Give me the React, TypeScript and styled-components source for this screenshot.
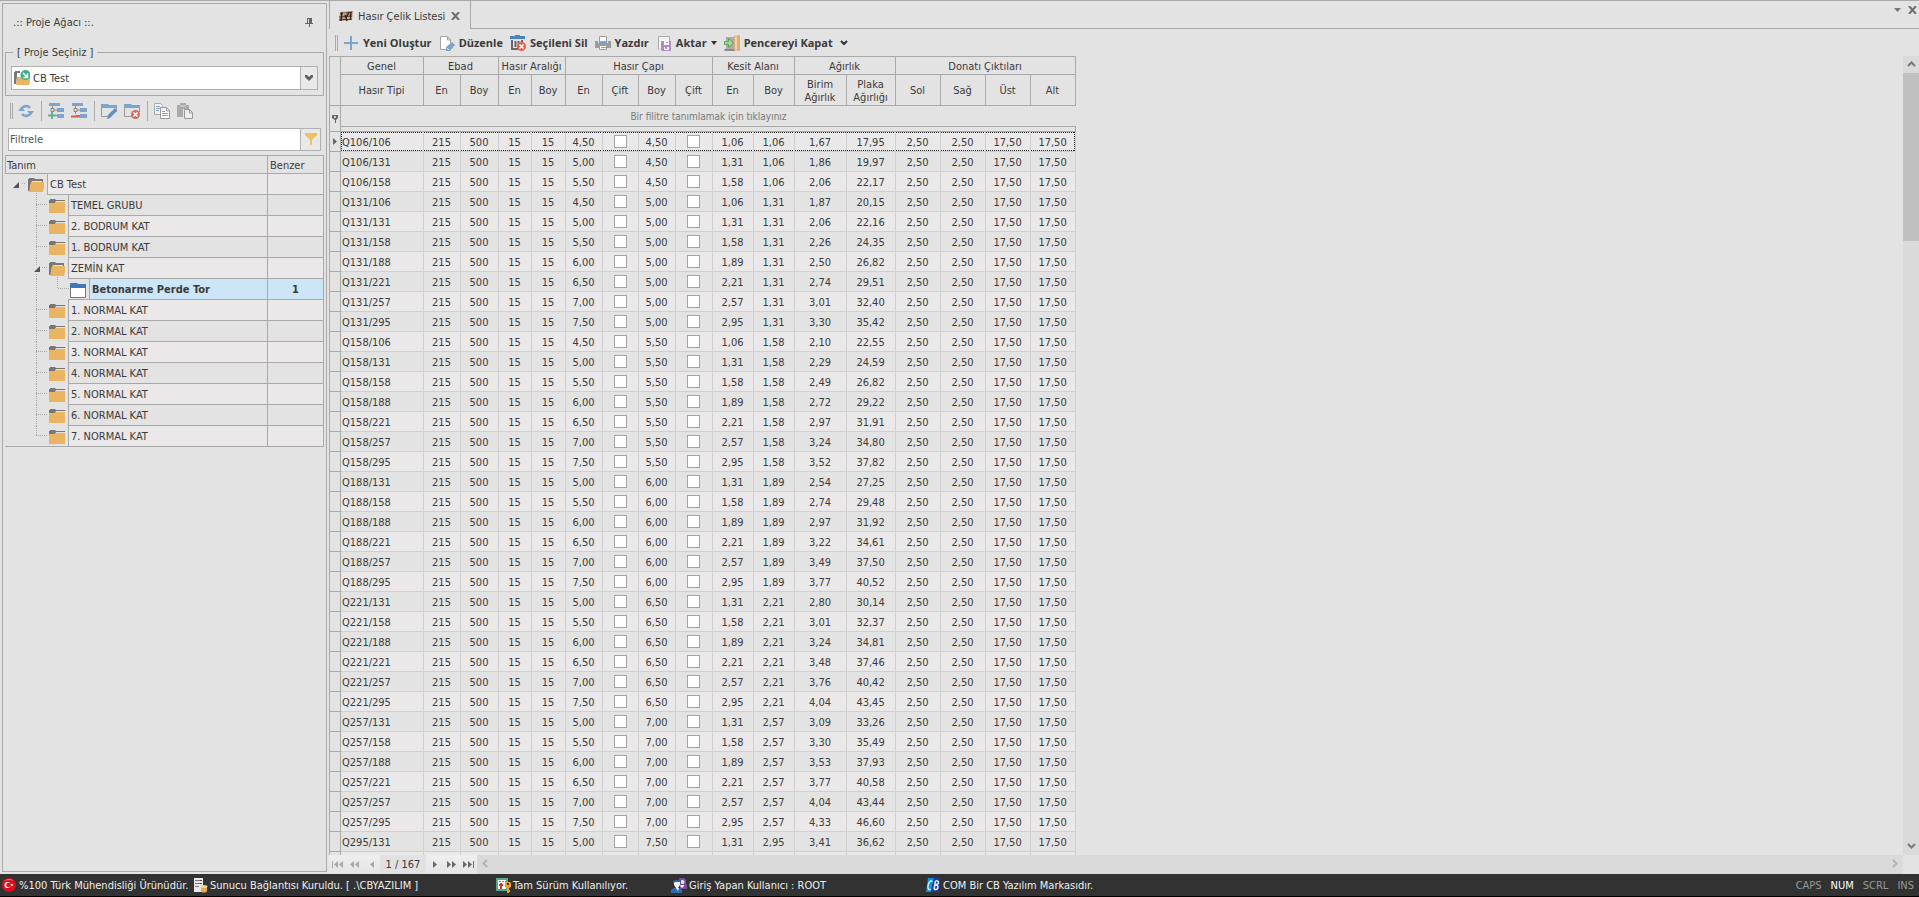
import React from 'react';
import styled, { createGlobalStyle, css } from 'styled-components';

const line = '#a9a9a9';
const soft = '#cfcfcf';
const face = '#e3e3e3';
const alt = '#eae8e9';
const ink = '#3a3a3a';
const blue = '#7ba4cf';
const orange = '#e9b562';
const grey = '#777777';

const Global = createGlobalStyle`
  *, *::before, *::after { box-sizing: border-box; }
  body { margin: 0; }
  body, button, input, select, table {
    font-family: 'DejaVu Sans Condensed', 'Noto Sans', sans-serif;
    font-size: 11px;
    line-height: 13px;
    color: ${ink};
  }
`;

/* ---------- page frame ---------- */

const Shell = styled.div`
  display: flex;
  flex-direction: column;
  height: 100vh;
  background: ${face};
`;

const Workspace = styled.div`
  display: flex;
  flex: 1;
  min-height: 0;
  gap: 2px;
  border-top: 1px solid ${line};
`;

const Panel = styled.aside`
  display: flex;
  flex-direction: column;
  width: 325px;
  flex: none;
  margin: 2px 0 2px 2px;
  border: 1px solid ${line};
`;

const Content = styled.main`
  display: flex;
  flex: 1;
  flex-direction: column;
  min-width: 0;
`;

const IconButton = styled.button`
  display: flex;
  align-items: center;
  justify-content: center;
  padding: 0;
  border: 0;
  background: none;
`;

/* ---------- project panel ---------- */

const PanelTitle = styled.header`
  display: flex;
  align-items: center;
  justify-content: space-between;
  height: 36px;
  margin-bottom: 6px;
  padding: 0 13px 0 10px;
`;

const PanelName = styled.h2`
  margin: 0;
  font-size: 11px;
  font-weight: 400;
`;

const ProjectGroup = styled.fieldset`
  min-width: 0;
  margin: 0 2px;
  padding: 7px 5px 5px;
  border: 1px solid ${line};
`;

const GroupLegend = styled.legend`
  margin-left: 2px;
  padding: 0 4px;
`;

const ComboFrame = styled.label`
  display: flex;
  align-items: center;
  height: 24px;
  padding-left: 2px;
  border: 1px solid #b0b0b0;
  background: #fff;
`;

const Combo = styled.select`
  flex: 1;
  height: 22px;
  padding: 0 0 0 3px;
  border: 0;
  background: #fff;
  appearance: none;
`;

const BoxEnd = styled.span<{ $w: number }>`
  display: flex;
  align-items: center;
  justify-content: center;
  align-self: stretch;
  width: ${(p) => p.$w}px;
  border-left: 1px solid #b0b0b0;
  background: #e9e9e9;
`;

const PanelTools = styled.div`
  display: flex;
  align-items: center;
  gap: 7px;
  height: 32px;
  padding: 0 7px 2px;
`;

const Grip = styled.span`
  width: 3px;
  height: 16px;
  margin-right: -2px;
  border: solid ${line};
  border-width: 0 1px;
`;

const Divider = styled.span`
  width: 1px;
  height: 20px;
  margin-right: -1px;
  background: ${line};
`;

const FilterFrame = styled.div`
  display: flex;
  height: 23px;
  margin: 0 5px 4px;
  border: 1px solid #b0b0b0;
  background: #fff;
`;

const FilterInput = styled.input`
  flex: 1;
  min-width: 0;
  padding: 0 1px;
  border: 0;
  background: none;
  &::placeholder { color: #555; opacity: 1; }
`;

const TreeTable = styled.table`
  width: auto;
  margin: 0 2px;
  border-spacing: 0;
  table-layout: fixed;
`;

const TreeHead = styled.th`
  height: 19px;
  padding: 1px 2px 0;
  border: solid ${line};
  border-width: 1px 1px 1px 0;
  font-weight: 400;
  text-align: left;
  &:first-child { width: 263px; border-left-width: 1px; padding-left: 1px; }
`;

const TreeCell = styled.td`
  height: 21px;
  padding: 0;
  border-right: 1px solid ${line};
`;

const TreeLine = styled.div`
  display: flex;
`;

const Label = styled.div<{ $tone: string; $bold?: boolean }>`
  flex: 1;
  height: 21px;
  padding-left: 2px;
  border-left: 1px solid ${line};
  border-bottom: 1px solid ${line};
  background: ${(p) => p.$tone};
  line-height: 21px;
  font-weight: ${(p) => (p.$bold ? 700 : 400)};
`;

const Amount = styled.div<{ $tone: string }>`
  height: 21px;
  border-bottom: 1px solid ${line};
  background: ${(p) => p.$tone};
  line-height: 21px;
  font-weight: 700;
  text-align: center;
`;

const Gutter = styled.svg`
  display: block;
  flex: none;
`;

/* ---------- document area ---------- */

const TabStrip = styled.div`
  display: flex;
  align-items: flex-start;
  justify-content: space-between;
  height: 28px;
  border-bottom: 1px solid ${line};
`;

const Tab = styled.div`
  display: flex;
  align-items: center;
  width: 142px;
  height: 28px;
  padding: 2px 10px 0 8px;
  border: solid ${line};
  border-width: 0 1px;
  background: ${face};
`;

const TabName = styled.span`
  flex: 1;
  padding-left: 4px;
  white-space: nowrap;
`;

const WindowButtons = styled.div`
  display: flex;
  align-items: center;
  gap: 7px;
  padding: 5px 2px 0 0;
`;

const ActionBar = styled.div`
  display: flex;
  align-items: center;
  gap: 7px;
  height: 27px;
  padding: 1px 6px 0;
`;

const ActionButton = styled(IconButton)`
  gap: 4px;
  font-family: 'Open Sans', 'Noto Sans', sans-serif;
  font-weight: 700;
  line-height: 16px;
  white-space: nowrap;
`;

const GridArea = styled.div`
  display: flex;
  flex: 1;
  min-height: 0;
`;

const GridViewport = styled.div`
  flex: 1;
  overflow: hidden;
`;

const Grid = styled.table`
  width: 747px;
  border-spacing: 0;
  table-layout: fixed;
`;

const Head = styled.th<{ $top?: boolean }>`
  height: ${(p) => (p.$top ? 19 : 31)}px;
  padding: 1px 1px 0 0;
  border: solid ${line};
  border-width: ${(p) => (p.$top ? '1px 1px 1px 0' : '0 1px 1px 0')};
  font-weight: 400;
  white-space: pre-line;
`;

const Marker = styled.th<{ $first?: boolean }>`
  padding: 0;
  border: solid ${line};
  border-width: ${(p) => (p.$first ? 1 : 0)}px 1px 1px 1px;
  svg { display: block; margin: 0 auto; }
`;

const FilterPrompt = styled.td`
  height: 21px;
  padding: 1px 0 0;
  border-bottom: 1px solid ${line};
  font-size: 10px;
  color: #777;
  text-align: center;
`;

const FilterGap = styled.td`
  height: 5px;
  padding: 0;
  border: solid ${line};
  border-width: 0 1px 1px 0;
`;

const dots = (dir: string) =>
  `repeating-linear-gradient(${dir}, #222 0 1px, transparent 1px 2px)`;

const Cell = styled.td`
  height: 20px;
  padding: 2px 1px 0 0;
  border: solid ${soft};
  border-width: 0 1px 1px 0;
  text-align: center;
  &:nth-child(2) { padding-left: 1px; text-align: left; }
`;

const TickCell = styled(Cell)`
  padding-top: 0;
`;

const Row = styled.tr<{ $focused?: boolean }>`
  &:nth-child(odd) ${Cell} { background-color: ${alt}; }
  ${(p) =>
    p.$focused &&
    css`
      ${Cell} {
        background-image: ${dots('90deg')}, ${dots('90deg')};
        background-position: 0 0, 0 100%;
        background-size: 100% 1px;
        background-repeat: no-repeat;
      }
      ${Cell}:nth-child(2) {
        background-image: ${dots('90deg')}, ${dots('90deg')}, ${dots('0deg')};
        background-position: 0 0, 0 100%, 0 0;
        background-size: 100% 1px, 100% 1px, 1px 100%;
      }
      ${Cell}:last-child {
        background-image: ${dots('90deg')}, ${dots('90deg')}, ${dots('0deg')};
        background-position: 0 0, 0 100%, 100% 0;
        background-size: 100% 1px, 100% 1px, 1px 100%;
      }
    `}
`;

const Tick = styled.input`
  display: block;
  width: 13px;
  height: 13px;
  margin: 0 auto;
  border: 1px solid #a3a3a3;
  background: #fff;
  appearance: none;
`;

const VerticalBar = styled.div`
  display: flex;
  flex-direction: column;
  width: 16px;
  background: #dadada;
`;

const BarButton = styled(IconButton)`
  width: 16px;
  height: 17px;
`;

const Track = styled.div`
  flex: 1;
`;

const Thumb = styled.div`
  height: 22%;
  background: #c0c0c0;
`;

const BottomBar = styled.div`
  display: flex;
  height: 19px;
`;

const Navigator = styled.div`
  display: flex;
  width: 148px;
  background: linear-gradient(#efefef, #e4e4e4);
`;

const NavButton = styled(IconButton)`
  width: 17px;
  height: 19px;
`;

const NavCount = styled.output`
  flex: 1;
  background: #e1e1e1;
  line-height: 20px;
  text-align: center;
`;

const HorizontalBar = styled.div`
  display: flex;
  flex: 1;
  justify-content: space-between;
  margin-right: 16px;
  background: #dadada;
`;

/* ---------- status bar ---------- */

const StatusBar = styled.footer`
  display: flex;
  align-items: center;
  height: 23px;
  padding: 0 5px 0 1px;
  border-bottom: 1px solid #000;
  background: #323232;
  color: #f0f0f0;
`;

const StatusItem = styled.span<{ $w: number }>`
  display: flex;
  align-items: center;
  gap: 2px;
  width: ${(p) => p.$w}px;
  white-space: nowrap;
`;

const LockKeys = styled.div`
  display: flex;
  gap: 9px;
  margin-left: auto;
`;

const LockKey = styled.span<{ $on?: boolean }>`
  color: ${(p) => (p.$on ? '#fff' : '#989898')};
`;

/* ---------- drawings ---------- */

type DrawProps = { children: React.ReactNode; w?: number; h?: number };
const Draw = ({ children, w = 16, h = 16 }: DrawProps) => (
  <svg width={w} height={h} viewBox={`0 0 ${w} ${h}`} fill="none" aria-hidden="true">
    {children}
  </svg>
);

const ClosedFolder = () => (
  <>
    <path d="M0 5V1h1V0h5l1 1h9v1H7L6 4H0z" fill={grey} />
    <path d="M0 4h6l1-1h9v11H0z" fill={orange} />
  </>
);

const OpenFolder = () => (
  <>
    <path d="M0 13V1h1V0h5l1 1h8v3h-1V3H4L2 8v5z" fill={grey} />
    <path d="M3 4h13v6l-1 4H1z" fill={orange} />
  </>
);

const ProjectIcon = () => (
  <Draw>
    <path d="M0 14V2h1V1h5v2H3v4l-1 7z" fill={grey} />
    <path d="M3 7h13v4l-1 4H2z" fill={orange} />
    <circle cx="11.500" cy="5" r="5" fill="#3fae84" />
    <path d="M9 3l4 4M13.500 3.500V7.500H9.500" stroke="#fff" strokeWidth="1.500" />
  </Draw>
);

const PinIcon = () => (
  <Draw w={8} h={9}>
    <path d="M2 0h5v5h1v1H0V5h2zM3 1v4h1V1zM3 6h2v3H4V6z" fill="#666" fillRule="evenodd" />
  </Draw>
);

const RefreshIcon = () => (
  <Draw>
    <path d="M3 7a5 4.500 0 0 1 9-2" stroke={blue} strokeWidth="2.500" />
    <path d="M13 9a5 4.500 0 0 1-9 2" stroke={blue} strokeWidth="2.500" />
    <path d="M9 8h7L12.500 12zM0 8h7L3.500 4z" fill={blue} />
  </Draw>
);

const NodeIcon = ({ add }: { add?: boolean }) => (
  <Draw>
    <path d="M1 0h11v3H1zM9 5h7v4H9zM9 11h7v4H9z" fill={blue} />
    <path d="M4.500 3v2M3 5.500h3v3H3zM6 7h3M4.500 9v2M5 12.500h4" stroke="#888" />
    <path d={add ? 'M0 12.500h8M4 9v7' : 'M0 13.500h9'} stroke={add ? '#66b18d' : '#d5604f'} strokeWidth="2" />
  </Draw>
);

const WindowIcon = ({ remove }: { remove?: boolean }) => (
  <Draw>
    <path d="M0 1h7l1 1h8v3H0z" fill={blue} />
    <path d="M.5 5v8.500h8M15.500 5v4" stroke="#999" />
    {remove ? (
      <>
        <circle cx="11.500" cy="11.500" r="4.500" fill="#d66b5e" />
        <path d="M9.500 9.500l4 4M13.500 9.500l-4 4" stroke="#fff" strokeWidth="1.500" />
      </>
    ) : (
      <path d="M6 16l1-4 7-7 2 3-7 7z" fill="#5f91c4" />
    )}
  </Draw>
);

const CopyIcon = () => (
  <Draw>
    <path d="M.5 .5h6l2 2v9h-8z" fill="#f2f2f2" stroke="#aaa" />
    <path d="M2 3.500h4M2 5.500h4M2 7.500h3" stroke={blue} />
    <path d="M6.500 4.500h6l3 3v8h-9z" fill="#fff" stroke="#999" />
    <path d="M12.500 5v3H15" stroke="#999" />
    <path d="M8 8.500h3M8 10.500h6M8 12.500h6" stroke={blue} />
  </Draw>
);

const PasteIcon = () => (
  <Draw>
    <path d="M0 2h3V0h6v2h3v4H6v8H0z" fill="#a9a9a9" />
    <path d="M3 3h6" stroke="#ddd" />
    <path d="M7.500 6.500h5l3 3v6h-8z" fill="#eee" stroke="#999" />
    <path d="M12.500 7v3H15" stroke="#999" />
  </Draw>
);

const FunnelIcon = () => (
  <Draw w={12} h={13}>
    <path d="M0 0h12v2L7 7v4l-2 2V7L0 2z" fill="#edc064" />
  </Draw>
);

const ComboArrow = () => (
  <Draw w={8} h={6}>
    <path d="M0 0h2l2 2 2-2h2v2L4 6 0 2z" fill="#5e5e5e" />
  </Draw>
);

const MeshIcon = () => (
  <Draw w={16} h={11}>
    <path d="M2 1l13-1-1 9-13 1z" fill="#b99a80" />
    <path d="M2 3l12-2M1 6l13-1M1 9l13-1" stroke="#5b3a26" />
    <path d="M4 1L3 10M7 3l2 7M11 1l-3 6M13 1l-1 8" stroke="#37241b" strokeWidth="1.500" />
    <path d="M5 3h3M9 7h3" stroke="#f1dfcc" />
  </Draw>
);

const CloseIcon = () => (
  <Draw w={9} h={8}>
    <path d="M1 0l7 8M8 0L1 8" stroke="#6f6f6f" strokeWidth="2" />
  </Draw>
);

const PlusIcon = () => (
  <Draw>
    <path d="M1 8h14M8 1v14" stroke={blue} strokeWidth="2" />
  </Draw>
);

const EditIcon = () => (
  <Draw>
    <path d="M2 2h6v3h3v4l-5 5H2z" fill="#fff" />
    <path d="M7 14.500H1.500v-13h7l3 3V8M8.500 2v3H11" stroke="#a5a5a5" />
    <path d="M7 16v-4l6-5 3 3-5 6z" fill={blue} />
    <path d="M8 13l2 2" stroke="#dbe7f4" />
  </Draw>
);

const TrashIcon = () => (
  <Draw>
    <path d="M5 0h5v1h5v3H0V1h5z" fill="#4a82bd" />
    <path d="M2 5v9h6M5.500 6v6M8.500 6v3M12 5v3" stroke="#686868" strokeWidth="2" />
    <path d="M1 4.500h13" stroke="#ddd" />
    <circle cx="11.500" cy="11.500" r="4.500" fill="#e8604a" />
    <path d="M9.500 9.500l4 4M13.500 9.500l-4 4" stroke="#fff" strokeWidth="1.500" />
  </Draw>
);

const PrintIcon = () => (
  <Draw>
    <path d="M4.500 6V1.500h7V6" fill="#fff" stroke="#9a9a9a" />
    <path d="M0 6h3v2h10V6h3v7H0z" fill="#9c9c9c" />
    <path d="M4 6h8v2H4z" fill={blue} />
    <path d="M4.500 10.500h7v4h-7z" fill="#fff" stroke="#9a9a9a" />
    <path d="M6 12.500h5" stroke={blue} />
  </Draw>
);

const ExportIcon = () => (
  <Draw>
    <path d="M2.500 14.500v-13h11V6" fill="#f5f5f5" stroke="#aaa" />
    <path d="M5 6h10v10H6l-1-1z" fill="#ab8cc4" />
    <path d="M8 6h5v4H8zM8 12h5v3H8z" fill="#fff" />
    <path d="M9 12h2v2H9zM10 7h2v1h-2z" fill="#ab8cc4" />
  </Draw>
);

const DoorIcon = () => (
  <Draw>
    <path d="M2 2h9v13H2z" fill="#adadad" />
    <path d="M0 14h11v2H1z" fill="#8c8c8c" />
    <path d="M10 1l6-1v16l-6-1z" fill="#dfae79" />
    <path d="M11 2l2-.5v13L11 14z" fill="#f3d3ab" />
    <path d="M.5 6.500h4v-3l5 4.500-5 4.500v-3h-4z" fill="#a4d8a0" stroke="#5ca35b" />
  </Draw>
);

const CaretIcon = () => (
  <Draw w={6} h={4}>
    <path d="M0 0h6L3 4z" fill="#333" />
  </Draw>
);

const MoreIcon = () => (
  <Draw w={8} h={6}>
    <path d="M1 1l3 3 3-3" stroke="#333" strokeWidth="2" />
  </Draw>
);

const FilterPin = () => (
  <Draw w={6} h={8}>
    <path d="M0 0h6v3L4 5v3H3V5L0 3z" fill="#666" />
    <path d="M2 1h2v2H2z" fill="#ccc" />
  </Draw>
);

const RowArrow = () => (
  <Draw w={4} h={7}>
    <path d="M0 0l4 3.500L0 7z" fill="#666" />
  </Draw>
);

const arrows = {
  up: 'M1 6l3.500-3.500L8 6',
  down: 'M1 2l3.500 3.500L8 2',
  left: 'M6 1L2.500 4.500 6 8',
  right: 'M2 1l3.500 3.500L2 8',
};
const Chevron = ({ to, faint }: { to: keyof typeof arrows; faint?: boolean }) => (
  <Draw w={9} h={9}>
    <path d={arrows[to]} stroke={faint ? '#b4b4b4' : '#777'} strokeWidth="2" />
  </Draw>
);

const navShapes: Record<string, [number, string]> = {
  'İlk': [11, 'M0 0h1v7H0zM6 0v7L2 3.500zM11 0v7L7 3.500z'],
  'Önceki sayfa': [9, 'M4 0v7L0 3.500zM9 0v7L5 3.500z'],
  'Önceki': [4, 'M4 0v7L0 3.500z'],
  'Sonraki': [4, 'M0 0v7l4-3.500z'],
  'Sonraki sayfa': [9, 'M0 0v7l4-3.500zM5 0v7l4-3.500z'],
  'Son': [11, 'M0 0v7l4-3.500zM5 0v7l4-3.500zM10 0h1v7h-1z'],
};
const NavStep = ({ name, off }: { name: string; off?: boolean }) => (
  <NavButton aria-label={name} disabled={off}>
    <Draw w={navShapes[name][0]} h={7}>
      <path d={navShapes[name][1]} fill={off ? '#a8a8a8' : '#696969'} />
    </Draw>
  </NavButton>
);

const FlagIcon = () => (
  <Draw>
    <circle cx="8" cy="8" r="7" fill="#d8101c" />
    <path d="M3 4a7 7 0 0 1 10 0 9 5 0 0 0-10 0z" fill="#f0707a" />
    <circle cx="6.500" cy="8" r="3" fill="#fff" />
    <circle cx="7.500" cy="8" r="2.300" fill="#d8101c" />
    <path d="M11 6.500l.5 1 1 .5-1 .5-.5 1-.6-1-1-.5 1-.5z" fill="#fff" />
  </Draw>
);

const ServerIcon = () => (
  <Draw>
    <path d="M2 1h9v14H2z" fill="#e9e9e9" />
    <path d="M3 3.500h7M3 6.500h7M3 9.500h4" stroke="#777" />
    <path d="M8 3h2v1H8zM8 6h2v1H8z" fill="#444" />
    <path d="M9 9v5c0 2 6 2 6 0V9z" fill="#e9a94c" />
    <ellipse cx="12" cy="9.500" rx="3.500" ry="1.500" fill="#f7cf8c" />
  </Draw>
);

const LicenceIcon = () => (
  <Draw>
    <path d="M2 2h10v11H2z" fill="#fff" stroke="#57a78e" strokeWidth="2" />
    <path d="M4 4.500h7" stroke="#888" strokeDasharray="2 1" />
    <path d="M4 7h1V6h2v1h1v2H7v3H5V9H4z" fill="#d8362b" />
    <path d="M10 5h5l1 1v4l-2 1v2h1v2h-1v1h-2v-5l-2-1z" fill="#f0a326" />
    <path d="M12 6h2v2h-2z" fill="#323232" />
  </Draw>
);

const UsersIcon = () => (
  <Draw>
    <path d="M8 1h5l2 2v4l1 1v4H9V6z" fill="#7a4a9c" />
    <circle cx="11.500" cy="5" r="2" fill="#e9e2ef" />
    <path d="M9 9l2 2 2-2v-1h-3z" fill="#fff" />
    <path d="M0 16v-3l3-2h5l3 2v3z" fill="#2c6fb3" />
    <path d="M3 4h6v4l-2 3H5L3 8z" fill="#f2f2f2" />
    <path d="M2 7V4l2-1h5l1 1v3L9 5H4z" fill="#2f5f98" />
    <path d="M5 11h3l-1 3z" fill="#fff" />
  </Draw>
);

const BrandIcon = () => (
  <Draw>
    <path d="M3 1h6L6 15H1z" fill="#0f8fd8" />
    <path d="M9 1h6v6l-1 8H6z" fill="#1d3a9c" />
    <path d="M7.500 4.500C5 3 3.500 6 3 9s1 4.500 3 3" stroke="#bff0ff" strokeWidth="1.500" />
    <path d="M10.500 4l-1.500 8.500M10.500 4c4-1 4 3 0 4 4 0 3 5-1.500 4.500" stroke="#dfe8ff" strokeWidth="1.500" />
  </Draw>
);

/* ---------- project tree ---------- */

type Node = { name: string; level: 0 | 1 | 2; open?: boolean; last?: boolean; count?: number };

const nodes: Node[] = [
  { name: 'CB Test', level: 0, open: true },
  { name: 'TEMEL GRUBU', level: 1 },
  { name: '2. BODRUM KAT', level: 1 },
  { name: '1. BODRUM KAT', level: 1 },
  { name: 'ZEMİN KAT', level: 1, open: true },
  { name: 'Betonarme Perde Tor', level: 2, count: 1 },
  { name: '1. NORMAL KAT', level: 1 },
  { name: '2. NORMAL KAT', level: 1 },
  { name: '3. NORMAL KAT', level: 1 },
  { name: '4. NORMAL KAT', level: 1 },
  { name: '5. NORMAL KAT', level: 1 },
  { name: '6. NORMAL KAT', level: 1 },
  { name: '7. NORMAL KAT', level: 1, last: true },
];

const TreeGutter = ({ node }: { node: Node }) => {
  const { level, open, last } = node;
  const width = 42 + level * 21;
  const iconX = 23 + level * 21;
  return (
    <Gutter width={width} height={21} viewBox={`0 0 ${width} 21`} fill="none" aria-hidden="true">
      <g stroke="#a8a8a8" strokeDasharray="1 1">
        {level > 0 && <path d={last ? 'M31.500 0V10' : 'M31.500 0V21'} />}
        {level === 0 && <path d="M31.500 19V21M15 9.500H21" />}
        {level === 1 && <path d={open ? 'M37 9.500H43M52.500 19V21' : 'M31 9.500H42'} />}
        {level === 2 && <path d="M52.500 0V9.500H64" />}
      </g>
      {open && (
        <>
          <rect x={8 + level * 21} y="7" width="8" height="8" fill={face} />
          <path d={`M${14 + level * 21} 8v6h-6z`} fill="#555" />
        </>
      )}
      <g transform={`translate(${iconX} 4)`}>
        {level === 2 ? (
          <>
            <path d="M.5 4v10.500h15V4" fill="#fff" stroke="#777" />
            <path d="M0 0h7l1 1h8v4H0z" fill="#3f78b4" />
          </>
        ) : open ? (
          <OpenFolder />
        ) : (
          <ClosedFolder />
        )}
      </g>
      {level === 2 && <path d="M63 20.500H84" stroke={line} />}
      {last && <path d="M0 20.500H63" stroke={line} />}
    </Gutter>
  );
};

const ProjectPanel = () => (
  <Panel>
    <PanelTitle>
      <PanelName>.:: Proje Ağacı ::.</PanelName>
      <IconButton aria-label="Sabitle"><PinIcon /></IconButton>
    </PanelTitle>
    <ProjectGroup>
      <GroupLegend>[ Proje Seçiniz ]</GroupLegend>
      <ComboFrame>
        <ProjectIcon />
        <Combo aria-label="Proje" defaultValue="CB Test">
          <option>CB Test</option>
        </Combo>
        <BoxEnd $w={17}><ComboArrow /></BoxEnd>
      </ComboFrame>
    </ProjectGroup>
    <PanelTools>
      <Grip />
      <IconButton aria-label="Yenile"><RefreshIcon /></IconButton>
      <Divider />
      <IconButton aria-label="Grup ekle"><NodeIcon add /></IconButton>
      <IconButton aria-label="Grup sil"><NodeIcon /></IconButton>
      <Divider />
      <IconButton aria-label="Düzenle"><WindowIcon /></IconButton>
      <IconButton aria-label="Sil"><WindowIcon remove /></IconButton>
      <Divider />
      <IconButton aria-label="Kopyala"><CopyIcon /></IconButton>
      <IconButton aria-label="Yapıştır"><PasteIcon /></IconButton>
    </PanelTools>
    <FilterFrame>
      <FilterInput aria-label="Filtrele" placeholder="Filtrele" />
      <BoxEnd $w={20}><FunnelIcon /></BoxEnd>
    </FilterFrame>
    <TreeTable>
      <thead>
        <tr>
          <TreeHead>Tanım</TreeHead>
          <TreeHead>Benzer</TreeHead>
        </tr>
      </thead>
      <tbody>
        {nodes.map((node, i) => {
          const tone = node.count ? '#cce5f7' : i % 2 ? face : alt;
          return (
            <tr key={node.name}>
              <TreeCell>
                <TreeLine>
                  <TreeGutter node={node} />
                  <Label $tone={tone} $bold={!!node.count}>{node.name}</Label>
                </TreeLine>
              </TreeCell>
              <TreeCell>
                <Amount $tone={tone}>{node.count}</Amount>
              </TreeCell>
            </tr>
          );
        })}
      </tbody>
    </TreeTable>
  </Panel>
);

/* ---------- mesh list ---------- */

const bars: Record<string, [string, string]> = {
  '106': ['4,50', '1,06'],
  '131': ['5,00', '1,31'],
  '158': ['5,50', '1,58'],
  '188': ['6,00', '1,89'],
  '221': ['6,50', '2,21'],
  '257': ['7,00', '2,57'],
  '295': ['7,50', '2,95'],
};

const meshes: [string, string, string][] = [
  ['106/106', '1,67', '17,95'], ['106/131', '1,86', '19,97'], ['106/158', '2,06', '22,17'],
  ['131/106', '1,87', '20,15'], ['131/131', '2,06', '22,16'], ['131/158', '2,26', '24,35'],
  ['131/188', '2,50', '26,82'], ['131/221', '2,74', '29,51'], ['131/257', '3,01', '32,40'],
  ['131/295', '3,30', '35,42'], ['158/106', '2,10', '22,55'], ['158/131', '2,29', '24,59'],
  ['158/158', '2,49', '26,82'], ['158/188', '2,72', '29,22'], ['158/221', '2,97', '31,91'],
  ['158/257', '3,24', '34,80'], ['158/295', '3,52', '37,82'], ['188/131', '2,54', '27,25'],
  ['188/158', '2,74', '29,48'], ['188/188', '2,97', '31,92'], ['188/221', '3,22', '34,61'],
  ['188/257', '3,49', '37,50'], ['188/295', '3,77', '40,52'], ['221/131', '2,80', '30,14'],
  ['221/158', '3,01', '32,37'], ['221/188', '3,24', '34,81'], ['221/221', '3,48', '37,46'],
  ['221/257', '3,76', '40,42'], ['221/295', '4,04', '43,45'], ['257/131', '3,09', '33,26'],
  ['257/158', '3,30', '35,49'], ['257/188', '3,53', '37,93'], ['257/221', '3,77', '40,58'],
  ['257/257', '4,04', '43,44'], ['257/295', '4,33', '46,60'], ['295/131', '3,41', '36,62'],
];

const columnWidths = [12, 83, 37, 38, 33, 34, 37, 36, 37, 37, 41, 41, 52, 49, 45, 45, 45, 45];

const bands: [string, number][] = [
  ['Genel', 1], ['Ebad', 2], ['Hasır Aralığı', 2], ['Hasır Çapı', 4],
  ['Kesit Alanı', 2], ['Ağırlık', 2], ['Donatı Çıktıları', 4],
];

const columns = [
  'Hasır Tipi', 'En', 'Boy', 'En', 'Boy', 'En', 'Çift', 'Boy', 'Çift', 'En', 'Boy',
  'Birim\nAğırlık', 'Plaka\nAğırlığı', 'Sol', 'Sağ', 'Üst', 'Alt',
];

const MeshRow = ({ mesh, focused }: { mesh: [string, string, string]; focused: boolean }) => {
  const [type, unit, plate] = mesh;
  const [lengthBar, widthBar] = type.split('/').map((key) => bars[key]);
  return (
    <Row $focused={focused}>
      <Marker scope="row">{focused && <RowArrow />}</Marker>
      <Cell>Q{type}</Cell>
      <Cell>215</Cell>
      <Cell>500</Cell>
      <Cell>15</Cell>
      <Cell>15</Cell>
      <Cell>{widthBar[0]}</Cell>
      <TickCell><Tick type="checkbox" aria-label={`Q${type} en çift`} /></TickCell>
      <Cell>{lengthBar[0]}</Cell>
      <TickCell><Tick type="checkbox" aria-label={`Q${type} boy çift`} /></TickCell>
      <Cell>{widthBar[1]}</Cell>
      <Cell>{lengthBar[1]}</Cell>
      <Cell>{unit}</Cell>
      <Cell>{plate}</Cell>
      <Cell>2,50</Cell>
      <Cell>2,50</Cell>
      <Cell>17,50</Cell>
      <Cell>17,50</Cell>
    </Row>
  );
};

const MeshGrid = () => (
  <Grid>
    <colgroup>
      {columnWidths.map((w, i) => <col key={i} width={w} />)}
    </colgroup>
    <thead>
      <tr>
        <Marker rowSpan={2} $first />
        {bands.map(([name, span]) => (
          <Head key={name} colSpan={span} $top>{name}</Head>
        ))}
      </tr>
      <tr>
        {columns.map((name, i) => <Head key={i}>{name}</Head>)}
      </tr>
      <tr>
        <Marker rowSpan={2}><FilterPin /></Marker>
        <FilterPrompt colSpan={17}>Bir filitre tanımlamak için tıklayınız</FilterPrompt>
      </tr>
      <tr>
        <FilterGap colSpan={17} />
      </tr>
    </thead>
    <tbody>
      {meshes.map((mesh, i) => <MeshRow key={mesh[0]} mesh={mesh} focused={i === 0} />)}
      <Row>
        <Marker />
        {columns.map((_, i) => <Cell key={i} />)}
      </Row>
    </tbody>
  </Grid>
);

/* ---------- page ---------- */

export default function App() {
  return (
    <Shell>
      <Global />
      <Workspace>
        <ProjectPanel />
        <Content>
          <TabStrip>
            <Tab>
              <MeshIcon />
              <TabName>Hasır Çelik Listesi</TabName>
              <IconButton aria-label="Sekmeyi kapat"><CloseIcon /></IconButton>
            </Tab>
            <WindowButtons>
              <IconButton aria-label="Pencereler">
                <Draw w={7} h={4}><path d="M0 0h7L3.500 4z" fill="#777" /></Draw>
              </IconButton>
              <IconButton aria-label="Kapat"><CloseIcon /></IconButton>
            </WindowButtons>
          </TabStrip>
          <ActionBar>
            <Grip />
            <ActionButton><PlusIcon />Yeni Oluştur</ActionButton>
            <ActionButton><EditIcon />Düzenle</ActionButton>
            <ActionButton><TrashIcon />Seçileni Sil</ActionButton>
            <ActionButton><PrintIcon />Yazdır</ActionButton>
            <ActionButton><ExportIcon />Aktar<CaretIcon /></ActionButton>
            <ActionButton><DoorIcon />Pencereyi Kapat</ActionButton>
            <IconButton aria-label="Diğer"><MoreIcon /></IconButton>
          </ActionBar>
          <GridArea>
            <GridViewport>
              <MeshGrid />
            </GridViewport>
            <VerticalBar>
              <BarButton aria-label="Yukarı"><Chevron to="up" /></BarButton>
              <Track><Thumb /></Track>
              <BarButton aria-label="Aşağı"><Chevron to="down" /></BarButton>
            </VerticalBar>
          </GridArea>
          <BottomBar>
            <Navigator>
              <NavStep name="İlk" off />
              <NavStep name="Önceki sayfa" off />
              <NavStep name="Önceki" off />
              <NavCount>1 / 167</NavCount>
              <NavStep name="Sonraki" />
              <NavStep name="Sonraki sayfa" />
              <NavStep name="Son" />
            </Navigator>
            <HorizontalBar>
              <BarButton aria-label="Sola"><Chevron to="left" faint /></BarButton>
              <BarButton aria-label="Sağa"><Chevron to="right" faint /></BarButton>
            </HorizontalBar>
          </BottomBar>
        </Content>
      </Workspace>
      <StatusBar>
        <StatusItem $w={191}><FlagIcon />%100 Türk Mühendisliği Ürünüdür.</StatusItem>
        <StatusItem $w={303}><ServerIcon />Sunucu Bağlantısı Kuruldu. [ .\CBYAZILIM ]</StatusItem>
        <StatusItem $w={176}><LicenceIcon />Tam Sürüm Kullanılıyor.</StatusItem>
        <StatusItem $w={254}><UsersIcon />Giriş Yapan Kullanıcı : ROOT</StatusItem>
        <StatusItem $w={200}><BrandIcon />COM Bir CB Yazılım Markasıdır.</StatusItem>
        <LockKeys>
          <LockKey>CAPS</LockKey>
          <LockKey $on>NUM</LockKey>
          <LockKey>SCRL</LockKey>
          <LockKey>INS</LockKey>
        </LockKeys>
      </StatusBar>
    </Shell>
  );
}
